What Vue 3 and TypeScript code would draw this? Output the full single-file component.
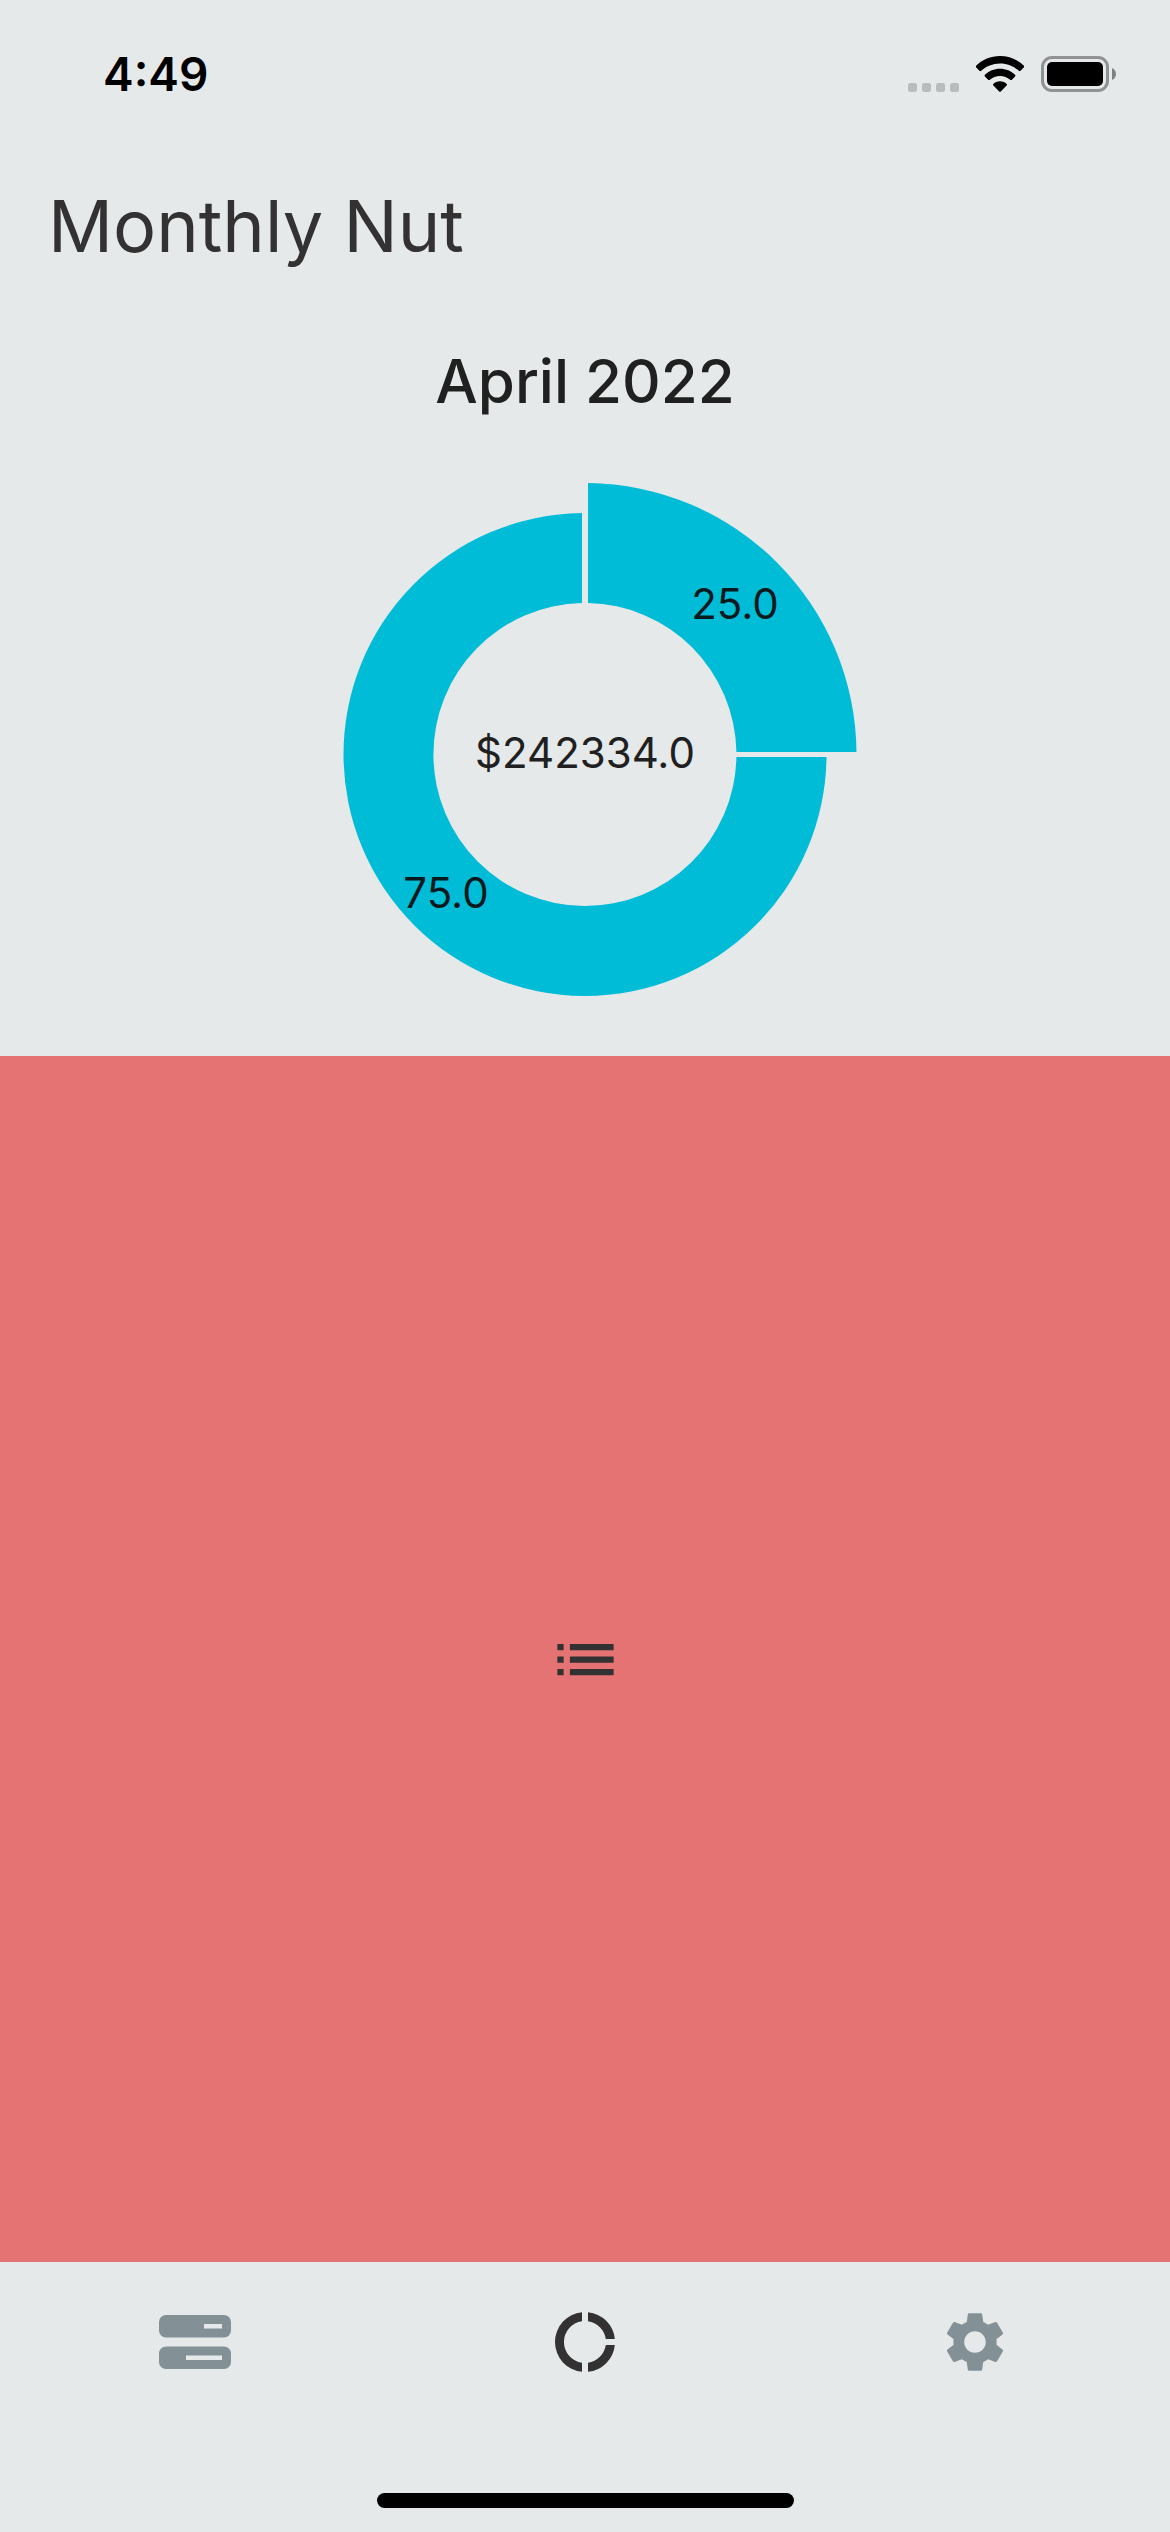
<script setup lang="ts">
interface Section {
  value: number
  path: string
  x: number
  y: number
}

const total = 242334
const month = 'April 2022'

const sections: Section[] = [
  { value: 25, path: 'M303 29A271.5 271.5 0 0 1 571.5 298H451.4A151.5 151.5 0 0 0 303 149Z', x: 450, y: 165 },
  {
    value: 75,
    path: 'M541.5 303A241.5 241.5 0 1 1 297 59V149A151.5 151.5 0 1 0 451.4 303Z',
    x: 161,
    y: 454,
  },
]
</script>

<template>
  <div class="app">
    <div class="status">
      <time class="clock">4:49</time>
      <div class="indicators">
        <svg class="dots" viewBox="0 0 51 9" aria-hidden="true">
          <rect v-for="n in 4" :key="n" :x="(n - 1) * 14" width="9" height="9" rx="2.5" fill="#b9bbbc" />
        </svg>
        <svg class="wifi" viewBox="0 0 48 36" aria-hidden="true">
          <path d="M24 0C33.300 0 41.800 3.600 47.700 9.600Q48.600 10.700 47.700 11.600L44.600 14.800Q43.700 15.600 42.800 14.800C37.900 10.200 31.300 7.400 24 7.400S10.100 10.200 5.200 14.800Q4.300 15.600 3.400 14.800L.3 11.600Q-.6 10.700 .3 9.600C6.200 3.600 14.700 0 24 0Z" />
          <path d="M24 12.800C29.900 12.800 35.200 15.100 39.100 18.800Q39.900 19.700 39.100 20.600L35.900 23.700Q35 24.500 34.100 23.700C31.400 21.400 27.900 20 24 20S16.600 21.400 13.900 23.700Q13 24.500 12.100 23.700L8.900 20.600Q8.100 19.700 8.900 18.800C12.800 15.100 18.100 12.800 24 12.800Z" />
          <path d="M24 25.300C26.600 25.300 29 26.300 30.700 27.900Q31.400 28.700 30.600 29.600L24.800 35.400Q24 36.200 23.200 35.400L17.400 29.600Q16.600 28.700 17.300 27.900C19 26.300 21.400 25.300 24 25.300Z" />
        </svg>
        <svg class="battery" viewBox="0 0 75 36" aria-hidden="true">
          <rect x="1.500" y="1.500" width="65" height="33" rx="9.500" fill="none" stroke="#8f9192" stroke-width="3" />
          <rect x="6" y="6" width="56" height="24" rx="5" />
          <path d="M71 12C76.300 14.200 76.300 21.800 71 24Z" fill="#7f8182" />
        </svg>
      </div>
    </div>

    <header class="bar">
      <h1>Monthly Nut</h1>
    </header>

    <main class="content">
      <h2>{{ month }}</h2>
      <svg class="chart" viewBox="0 0 600 602" role="img" aria-label="Monthly spending">
        <path v-for="s in sections" :key="s.value" :d="s.path" fill="#00bcd7" />
        <text v-for="s in sections" :key="s.value" class="share" :x="s.x" :y="s.y">{{ s.value.toFixed(1) }}</text>
        <text class="total" x="300" y="314">${{ total.toFixed(1) }}</text>
      </svg>
      <section class="panel">
        <svg class="list" viewBox="0 0 24 24" aria-hidden="true">
          <path d="M3 13h2v-2H3v2zm0 4h2v-2H3v2zm0-8h2V7H3v2zm4 4h14v-2H7v2zm0 4h14v-2H7v2zM7 7v2h14V7H7z" />
        </svg>
      </section>
    </main>

    <nav class="tabs">
      <button type="button" aria-label="Budgets">
        <svg viewBox="0 0 72 72" aria-hidden="true">
          <path fill-rule="evenodd" d="M7 9H65A7 7 0 0 1 72 16V24.500A7 7 0 0 1 65 31.500H7A7 7 0 0 1 0 24.500V16A7 7 0 0 1 7 9ZM45 18V22.500H63V18ZM7 40.500H65A7 7 0 0 1 72 47.500V56A7 7 0 0 1 65 63H7A7 7 0 0 1 0 56V47.500A7 7 0 0 1 7 40.500ZM27 49.500V54H63V49.500Z" />
        </svg>
      </button>
      <button type="button" class="active" aria-label="Monthly" aria-current="page">
        <svg viewBox="0 0 72 72" aria-hidden="true">
          <path d="M33 6.150V15.210A21 21 0 0 0 33 56.790V65.850A30 30 0 0 1 33 6.150ZM39 6.150A30 30 0 0 1 65.850 33H56.790A21 21 0 0 0 39 15.210ZM39 65.850A30 30 0 0 0 65.850 39H56.790A21 21 0 0 1 39 56.790Z" />
        </svg>
      </button>
      <button type="button" aria-label="Settings">
        <svg viewBox="0 0 24 24" aria-hidden="true">
          <path d="M19.140 12.940c.04-.3.06-.61.06-.94 0-.32-.02-.64-.07-.94l2.030-1.580c.18-.14.23-.41.12-.61l-1.920-3.320c-.12-.22-.37-.29-.59-.22l-2.390.96c-.5-.38-1.030-.7-1.620-.94l-.36-2.540c-.04-.24-.24-.41-.48-.41h-3.840c-.24 0-.43.17-.47.41l-.36 2.540c-.59.24-1.130.57-1.620.94l-2.390-.96c-.22-.08-.47 0-.59.22L2.740 8.870c-.12.21-.08.47.12.61l2.030 1.580c-.05.3-.09.63-.09.94s.02.64.07.94l-2.030 1.580c-.18.14-.23.41-.12.61l1.920 3.320c.12.22.37.29.59.22l2.390-.96c.5.38 1.030.7 1.620.94l.36 2.540c.05.24.24.41.48.41h3.840c.24 0 .44-.17.47-.41l.36-2.540c.59-.24 1.130-.56 1.620-.94l2.390.96c.22.08.47 0 .59-.22l1.920-3.320c.12-.22.07-.47-.12-.61l-2.010-1.580zM12 15.600c-1.980 0-3.600-1.620-3.600-3.600s1.620-3.600 3.600-3.600 3.600 1.620 3.600 3.600-1.620 3.600-3.600 3.600z" />
        </svg>
      </button>
    </nav>
    <div class="home"></div>
  </div>
</template>

<style>
body {
  margin: 0;
  background: #e5e9ea;
}
</style>

<style scoped>
.app {
  display: flex;
  flex-direction: column;
  min-height: 100vh;
  background: #e5e9ea;
  color: #202020;
  font-family: Inter, "Liberation Sans", sans-serif;
}

.status {
  display: flex;
  justify-content: space-between;
  align-items: flex-start;
  box-sizing: border-box;
  height: 141px;
  padding: 55px 54px 0 103px;
  color: #000;
}

.clock {
  font-size: 46px;
  font-weight: 600;
  line-height: 38px;
}

.indicators {
  display: flex;
  align-items: flex-end;
  height: 37px;
}

.dots {
  width: 51px;
  height: 9px;
  margin-right: 17px;
}

.wifi {
  width: 48px;
  height: 36px;
  margin-right: 17px;
}

.battery {
  width: 75px;
  height: 36px;
}

.bar {
  display: flex;
  align-items: center;
  box-sizing: border-box;
  height: 168px;
  padding: 2px 48px 0;
}

h1 {
  margin: 0;
  color: #343132;
  font-size: 72px;
  font-weight: 400;
  line-height: 84px;
}

.content {
  display: flex;
  flex: 1;
  flex-direction: column;
  align-items: center;
}

h2 {
  margin: 0;
  font-size: 60px;
  font-weight: 500;
  line-height: 145px;
}

.chart {
  width: 600px;
  height: 602px;
}

.chart text {
  font-size: 42px;
  text-anchor: middle;
}

.share {
  fill: #061a1e;
}

.total {
  fill: #202020;
}

.panel {
  display: flex;
  flex: 1;
  align-self: stretch;
  align-items: center;
  justify-content: center;
  background: #e57373;
}

.list {
  width: 75px;
  height: 75px;
  fill: #343132;
}

.tabs {
  display: flex;
  height: 160px;
}

.tabs button {
  display: flex;
  flex: 1;
  align-items: center;
  justify-content: center;
  padding: 0;
  border: 0;
  background: none;
  color: #839197;
}

.tabs .active {
  color: #343132;
}

.tabs svg {
  width: 72px;
  height: 72px;
  fill: currentColor;
}

.home {
  align-self: center;
  width: 417px;
  height: 15px;
  margin: 71px 0 24px;
  border-radius: 8px;
  background: #000;
}
</style>
